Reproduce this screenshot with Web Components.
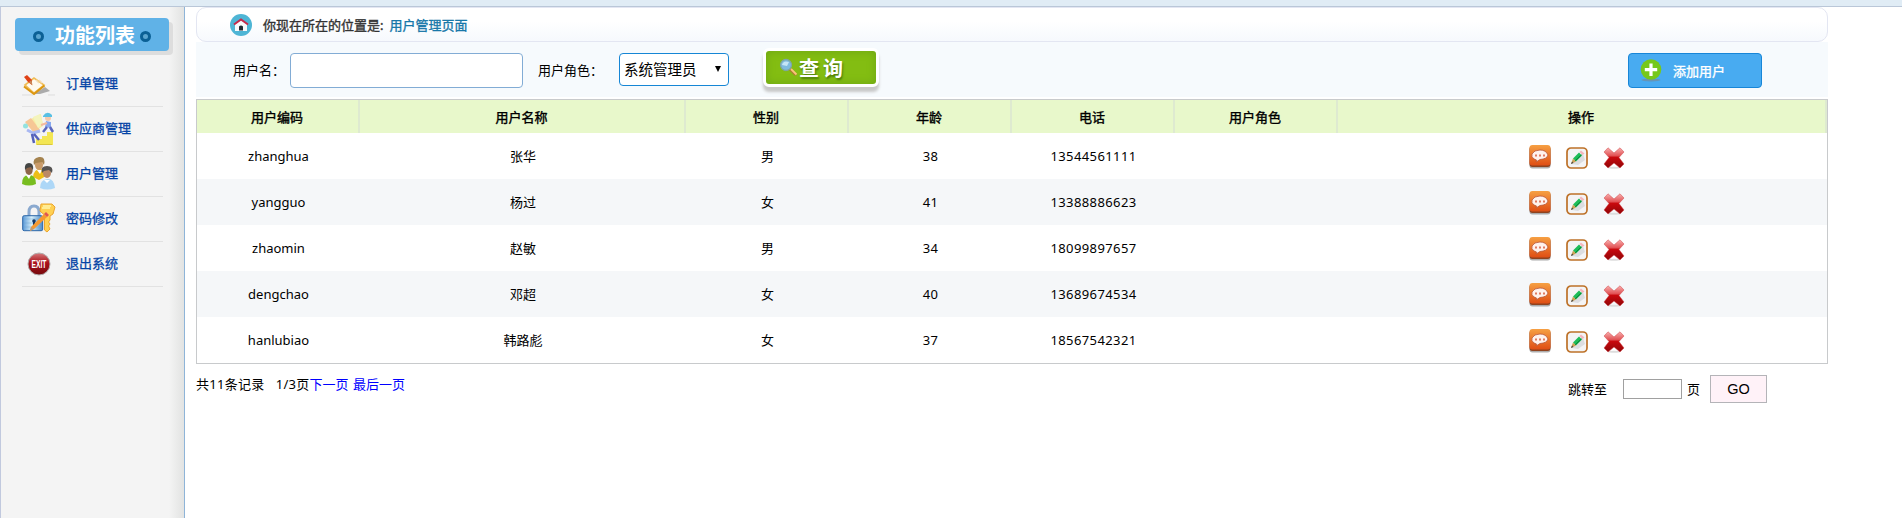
<!DOCTYPE html>
<html lang="zh-CN">
<head>
<meta charset="utf-8">
<title>用户管理</title>
<style>
body{margin:0;font:13px/20px "Noto Sans","Noto Sans CJK SC",sans-serif;color:#000;background:#fff;height:518px;overflow:hidden}
</style>
</head>
<body>
<user-admin-app></user-admin-app>
<script>
const icons={
order:`<svg width="34" height="28" viewBox="0 0 34 28"><path d="M0 25h11M26 25h7" stroke="#ddd"/><path d="M12 24L23 17 28 21 18 24Z" fill="#999" opacity=".8"/><path d="M3 15L12 8 22 15 12 23Z" fill="#fffaf0" stroke="#f0bd55" stroke-width="1.6"/><path d="M2 16.5L12 24 22.5 15.5" fill="none" stroke="#dc9711" stroke-width="2"/><path d="M14 10L17 13M17 10L20 13" stroke="#f3dcb8" stroke-width="1.5"/><path d="M2 7L5 5 10 10 10 15 6 12Z" fill="#df4115"/><path d="M7 12L10.500 15.500 9.500 10Z" fill="#c98a5b"/></svg>`,
supplier:`<svg width="34" height="34" viewBox="0 0 34 34"><path d="M14 33V27H20V24H25V20H31V33Z" fill="#f3e653"/><path d="M15 32.500H30" stroke="#d8c640"/><path d="M12 5L19 2 21 14 12 20 4 11Z" fill="#f6eda6"/><path d="M3 10L9 6 18 18 12 21Z" fill="#f6c795"/><path d="M11 5L18 2 21 11 16 16Z" fill="#f4f4bd"/><circle cx="3.500" cy="14" r="2.500" fill="#93e2df"/><path d="M5 18L11 21 18 19" stroke="#a9b8f2" stroke-width="3" fill="none"/><path d="M10 22L12 31M12 22L17 28" stroke="#5561bc" stroke-width="2.500" fill="none"/><circle cx="26" cy="6" r="3" fill="#f5c9ac"/><path d="M21 4Q25-2 30 3L30 5 21 5Z" fill="#58c0e4"/><path d="M23 15L24 9 29 10 29 16Z" fill="#86a8f0"/><path d="M25 11L19 13" stroke="#f3b9a0" stroke-width="2"/><path d="M25 15L21 20M28 15L31 20" stroke="#5b67bd" stroke-width="2.500"/></svg>`,
users:`<svg width="34" height="34" viewBox="0 0 34 34"><path d="M11 20Q12 12 18 12T24 19L17 23Z" fill="#edbe18"/><path d="M15 13L18 17 20 13" fill="#fff"/><ellipse cx="17" cy="8" rx="4" ry="5" fill="#c99b69"/><path d="M12 8Q10 1 17 0T22 8L20 5 14 6Z" fill="#a5834f"/><path d="M0 27Q0 18 7 18T14 27Q7 30 0 27Z" fill="#78bd20"/><path d="M4 18L7 22 9 18" fill="#fff"/><ellipse cx="7" cy="13" rx="3.700" ry="5" fill="#8d6549"/><path d="M3 13Q2 6 7 6T11 13L9 10 5 11Z" fill="#434544"/><path d="M18 31Q18 23 25 22T33 31Q25 34 18 31Z" fill="#add7f7"/><path d="M22 23L25 26 28 23" fill="#fff"/><ellipse cx="25" cy="16" rx="4" ry="5" fill="#ba8967"/><path d="M20 16Q18 9 25 9T30 16L27 13 22 14Z" fill="#555351"/></svg>`,
password:`<svg width="34" height="32" viewBox="0 0 34 32"><defs><linearGradient id="a"><stop stop-color="#5b9ad8"/><stop offset=".45" stop-color="#d6effa"/><stop offset="1" stop-color="#4a88c6"/></linearGradient></defs><path d="M7 13V9Q7 3 12 3T17 9V13" fill="none" stroke="#8aa9cf" stroke-width="3"/><rect x=".7" y="12.700" width="20" height="15" rx="1.500" fill="url(#a)" stroke="#2c67a8"/><path d="M2 16H20M2 20H20M2 24H20" stroke="#67a1d0" opacity=".4"/><path d="M19 1H30L33 4 31 11 28 13V17L26.500 19 28 21 26.500 23 28 26 25 29 22.500 27V12L18 8Z" fill="#ffd052" stroke="#eba52e"/><path d="M21 3H29M20 5H28" stroke="#fff4a8" stroke-width="1.500"/><circle cx="12" cy="18" r="1.800" fill="#123767"/><path d="M11 18H13V24H11Z" fill="#123767"/><path d="M9 24L22 11 25 14 12 26 8 28Z" fill="#f59930"/><path d="M22 11L24 9 27 12 25 14Z" fill="#e05650"/><path d="M9 24L12 26 8 28Z" fill="#b79a7c"/></svg>`,
exit:`<svg width="24" height="24" viewBox="0 0 24 24"><defs><linearGradient id="a" x2="0" y2="1"><stop stop-color="#d67b7d"/><stop offset=".45" stop-color="#aa1018"/><stop offset="1" stop-color="#750a0e"/></linearGradient></defs><circle cx="12" cy="12" r="11" fill="url(#a)" stroke="#b2adad"/><text x="12" y="15.500" text-anchor="middle" fill="#fff" textLength="15" lengthAdjust="spacingAndGlyphs" style="font:bold 10px 'Liberation Sans'">EXIT</text></svg>`,
home:`<svg width="22" height="22" viewBox="0 0 22 22"><circle cx="11" cy="11" r="11" fill="#4eb5d5"/><path d="M5 10L11 6 17 10V17H5Z" fill="#f8fafb"/><path d="M4 10.500L11 5.500 18 10.500" fill="none" stroke="#c5294b" stroke-width="2"/><path d="M9 16.500V12.500Q11 10.500 13 12.500V16.500Z" fill="#202b32"/></svg>`,
search:`<svg width="20" height="20" viewBox="0 0 20 20"><path d="M11 11L17 17" stroke="#b07a35" stroke-width="3"/><path d="M12 11L17.500 16.500" stroke="#f8c878" stroke-width="1.800"/><circle cx="7" cy="7" r="5.500" fill="#7fbbe0" stroke="#7fa6a4" stroke-width="1.300"/><path d="M3 7Q4 2 10 4L8 8Z" fill="#e2f6ff" opacity=".7"/></svg>`,
add:`<svg width="22" height="23" viewBox="0 0 22 23"><ellipse cx="11" cy="21" rx="9.500" ry="1.400" fill="#748c9d" opacity=".7"/><circle cx="11" cy="10.500" r="10.300" fill="#76c81c"/><path d="M11 4.500V17M4.800 10.700H17.200" stroke="#fff" stroke-width="3.200"/></svg>`,
view:`<svg width="22" height="24" viewBox="0 0 22 24"><defs><linearGradient id="a" x2="0" y2="1"><stop stop-color="#f6a043"/><stop offset="1" stop-color="#df4e14"/></linearGradient></defs><rect x=".5" y="2" width="21" height="21.500" rx="3" fill="#777" opacity=".6"/><rect x=".5" y="1" width="21" height="21" rx="3" fill="#8f431f"/><rect x=".5" y="0" width="21" height="20.500" rx="3" fill="url(#a)"/><path d="M5 14Q2 12 3 9Q5 5 11 5T19 10Q18 14 11 14.500L7 17 7.500 15Z" fill="#fff2ed" stroke="#b85433" stroke-width=".8"/><path d="M6 9.500H8V11.500H6ZM10 9.500H12V11.500H10ZM14 9.500H16V11.500H14Z" fill="#df7b62"/></svg>`,
edit:`<svg width="22" height="22" viewBox="0 0 22 22"><rect x="1" y="1" width="20" height="20" rx="4" fill="#f4f4f5" stroke="#bd7128" stroke-width="1.700"/><path d="M6 17L17 7 19 13 12 18Z" fill="#dcdde0"/><path d="M7 11.500L13 5.500 16 8.500 10 14.500Z" fill="#1dbd58"/><path d="M9 14L15.500 7.800" stroke="#067f34"/><path d="M13.500 5L15 3.500 18.500 6.500 16.500 8Z" fill="#f4b6bd"/><path d="M7 11.500L10 14.500 5 17Z" fill="#cba253"/><path d="M5 17L6 14.500 7.500 16Z" fill="#444"/></svg>`,
del:`<svg width="22" height="22" viewBox="0 0 22 22"><defs><linearGradient id="a" x2="0" y2="1"><stop stop-color="#f9b0af"/><stop offset=".38" stop-color="#e25557"/><stop offset=".48" stop-color="#c8090d"/><stop offset="1" stop-color="#8f0508"/></linearGradient></defs><ellipse cx="11" cy="20.700" rx="6" ry="1" fill="#ddd"/><path d="M1 5L5 .8 11 6 17 .8 21 5 16 10.500 21 17 17 21 11 16 5 21 1 17 6 10.500Z" fill="url(#a)" stroke="#cf4549" stroke-width=".5"/></svg>`
};
function define(name,render){customElements.define(name,class extends HTMLElement{constructor(){super();this.attachShadow({mode:"open"})}connectedCallback(){this.shadowRoot.innerHTML=render(this)}})}
define("ui-icon",e=>`<style>:host{display:inline-flex;flex:none}svg{display:block;overflow:visible}</style>${icons[e.getAttribute("name")]}`);
define("side-item",e=>`<style>:host{display:flex;height:44px;width:141px;border-bottom:1px solid #e2e2e2;align-items:center;color:#0343a5;-webkit-text-stroke:.3px #0343a5}.i{width:44px;display:flex}.t{padding-bottom:2px}ui-icon{margin-left:${e.getAttribute("icon")==="exit"?5:0}px}</style><div class="i"><ui-icon name="${e.getAttribute("icon")}"></ui-icon></div><span class="t"><slot></slot></span>`);
define("side-menu",()=>`<style>:host{display:block;box-sizing:border-box;width:185px;border-left:1px solid #c1c9de;border-right:1px solid #8eb4d8;background:linear-gradient(90deg,#f4f4f4 0,#f4f4f4 168px,#e3e4e3 182px);padding:11px 0 0 14px}.title{box-sizing:border-box;width:154px;height:33px;border-radius:4px;background:#60b2e7;box-shadow:4px 4px 0 #ddd;display:flex;align-items:center;justify-content:space-between;padding:0 18px;color:#fff;font:bold 20px/33px "Noto Sans CJK SC",sans-serif}.dot{box-sizing:border-box;width:11px;height:11px;border:3px solid #0b6095;border-radius:50%;background:#5ba5cf;margin-top:3px}.title span{margin:0 3px 0 9px}nav{padding:11px 0 0 5px;margin-left:2px}</style><div class="title"><i class="dot"></i><span>功能列表</span><i class="dot"></i></div><nav><side-item icon="order">订单管理</side-item><side-item icon="supplier">供应商管理</side-item><side-item icon="users">用户管理</side-item><side-item icon="password">密码修改</side-item><side-item icon="exit">退出系统</side-item></nav>`);
define("location-bar",()=>`<style>:host{box-sizing:border-box;display:flex;align-items:center;height:35px;padding-left:33px;border:1px solid #e3e6f2;border-radius:10px;background:linear-gradient(#fff 40%,#f6f9fd);color:#333;-webkit-text-stroke:.35px}.t{margin-left:11px}b{font-weight:400;color:#1878a9;margin-left:6px}</style><ui-icon name="home"></ui-icon><span class="t">你现在所在的位置是:<b>用户管理页面</b></span>`);
define("search-bar",()=>`<style>:host{box-sizing:border-box;display:flex;align-items:flex-start;height:55px;padding:11px 66px 0 37px;background:#f6fafd}label{line-height:34px;width:57px}input{box-sizing:border-box;width:233px;height:35px;border:1px solid #82acd5;border-radius:4px;padding:0;background:#fff}.role{margin-left:15px;width:81px}.select{box-sizing:border-box;width:110px;height:33px;border:1px solid #1686d5;border-radius:4px;background:#fff;font-size:14.5px;line-height:31px;display:flex;justify-content:space-between;align-items:center;padding:0 7px 0 4px}.arrow{width:0;height:0;border:3px solid transparent;border-top:6px solid #000;border-bottom:0;margin-top:-2px}.query{box-sizing:border-box;display:flex;width:116px;height:39px;margin:-5px 0 0 34px;border:3px solid #fff;border-radius:6px;background:#83bd12;box-shadow:0 5px 3px #c8c8c8,inset 0 0 8px #6ca414;padding:0 0 0 13px;align-items:center;color:#fff;font:bold 20px/30px "Noto Sans CJK SC",sans-serif;letter-spacing:4px;text-shadow:1px 2px 2px #4c7b0a}.add{box-sizing:border-box;display:flex;align-items:center;width:134px;height:35px;border:1px solid #1786d8;border-radius:4px;background:#48abf1;color:#fff;margin-left:auto;padding-left:11px;-webkit-text-stroke:.35px}.add span{margin-left:11px}</style><label>用户名：</label><input aria-label="用户名"><label class="role">用户角色：</label><div class="select"><span>系统管理员</span><i class="arrow"></i></div><div class="query"><ui-icon name="search"></ui-icon><span>查询</span></div><div class="add"><ui-icon name="add"></ui-icon><span>添加用户</span></div>`);
const people=[["zhanghua","张华","男","38","13544561111"],["yangguo","杨过","女","41","13388886623"],["zhaomin","赵敏","男","34","18099897657"],["dengchao","邓超","女","40","13689674534"],["hanlubiao","韩路彪","女","37","18567542321"]];
define("user-table",()=>`<style>:host{display:block;border:1px solid #c8cacc;margin-top:2px}.row{display:grid;grid-template-columns:163px 326px repeat(4,163px) 489px;height:46px;align-items:center;text-align:center;background:#fff}.row:nth-of-type(odd){background:#f5f7f9}.head.row{height:33px;background:#e8f8cb;-webkit-text-stroke:.4px}.head>*{box-sizing:border-box;height:33px;line-height:34px;border-right:2px solid #deead0;padding-right:1px}.num{letter-spacing:.4px}.actions{display:flex;justify-content:center;gap:15px;padding:2px 12px 0 0}.actions ui-icon:first-child{margin-top:-1px}.actions ui-icon+ui-icon{margin-top:1px}</style><div class="head row">${["用户编码","用户名称","性别","年龄","电话","用户角色","操作"].map(x=>`<span>${x}</span>`).join("")}</div>${people.map(p=>`<div class="row">${p.map((x,i)=>`<span${i>2?' class="num"':""}>${x}</span>`).join("")}<span></span><div class="actions"><ui-icon name="view"></ui-icon><ui-icon name="edit"></ui-icon><ui-icon name="del"></ui-icon></div></div>`).join("")}`);
define("page-footer",()=>`<style>:host{display:flex;justify-content:space-between;padding-top:11px}.left{white-space:pre;margin-top:-1px}.num{letter-spacing:.3px}.page{margin-left:11px}a{color:#00f}a+a{margin-left:1px}.jump{display:flex;align-items:center;height:28px;padding-right:61px}input{box-sizing:border-box;width:59px;height:20px;border:1px solid #a0a0a0;padding:0;margin:0 5px 0 16px}.go{box-sizing:border-box;width:57px;height:28px;margin-left:10px;border:1px solid #b4b4b8;background:#fff2f8;font:14.5px/26px "Liberation Sans",sans-serif;text-align:center}</style><div class="left"><span class="num">共11条记录</span><span class="num page">1/3页</span><a>下一页</a> <a>最后一页</a></div><div class="jump"><span>跳转至</span><input aria-label="页码"><span>页</span><div class="go">GO</div></div>`);
define("user-admin-app",()=>`<style>:host{display:grid;grid-template:7px 511px/185px 1fr}.top{grid-column:1/3;background:#e0ecf5;border-bottom:1px solid #bac7d8}main{padding:0 74px 0 11px}</style><div class="top"></div><side-menu></side-menu><main><location-bar></location-bar><search-bar></search-bar><user-table></user-table><page-footer></page-footer></main>`);
</script>
</body>
</html>
